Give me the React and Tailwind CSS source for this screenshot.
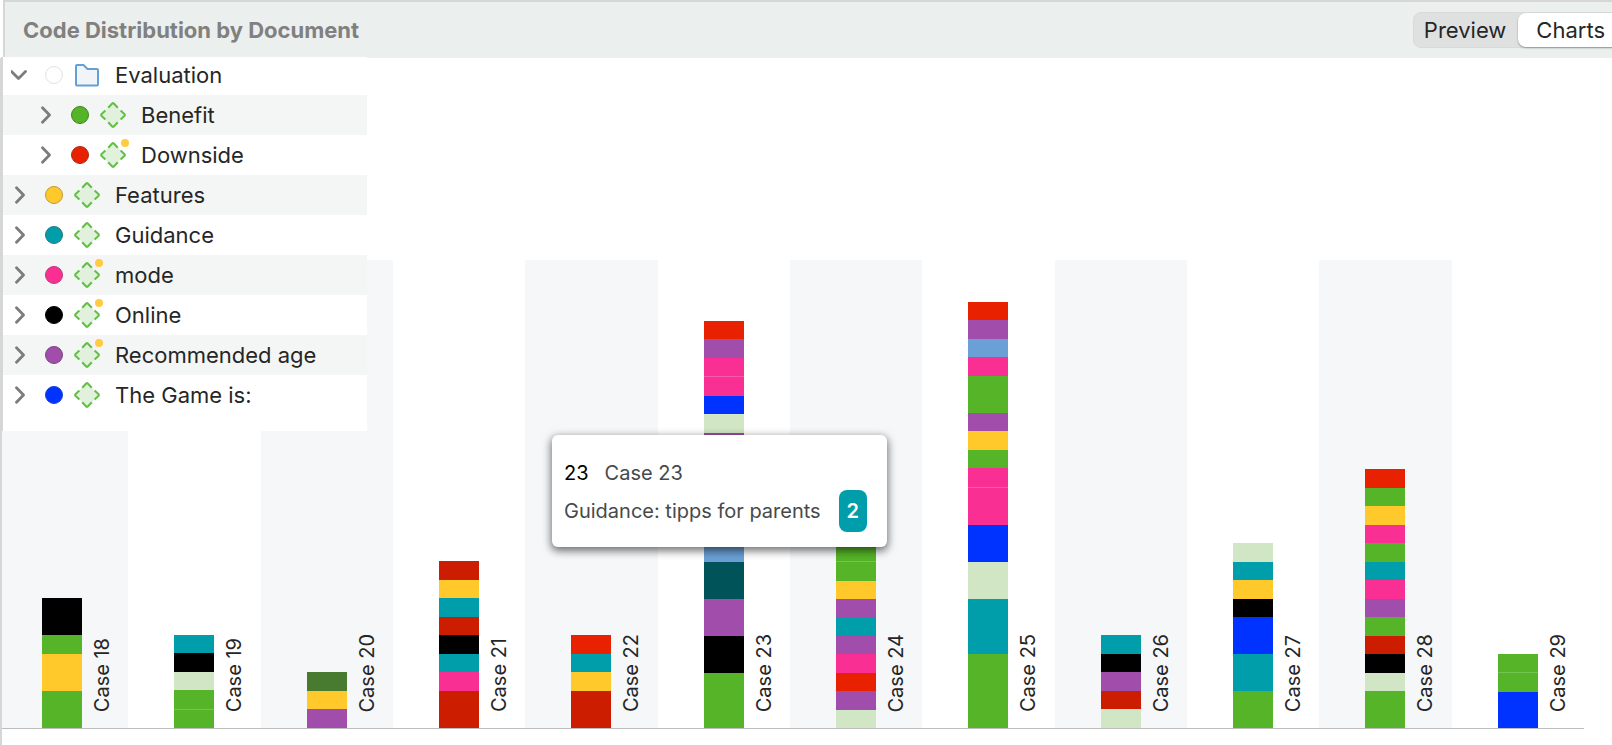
import { useState } from 'react';

const UNIT = 18.5;

const COLORS = {
  green: 'bg-[#55b427]',
  darkGreen: 'bg-[#487a30]',
  lightGreen: 'bg-[#d0e6c4]',
  yellow: 'bg-[#ffc92c]',
  red: 'bg-[#e82100]',
  darkRed: 'bg-[#cc1d00]',
  teal: 'bg-[#009eaa]',
  darkTeal: 'bg-[#005459]',
  pink: 'bg-[#f92f93]',
  purple: 'bg-[#a04dab]',
  blue: 'bg-[#0033ff]',
  lightBlue: 'bg-[#6aa0d5]',
  black: 'bg-black',
};

const codes = [
  { name: 'Evaluation', folder: true, open: true, dot: 'bg-white border-[#e2e2e2]' },
  { name: 'Benefit', child: true, dot: 'bg-[#55b427] border-[#3f861d]' },
  { name: 'Downside', child: true, memo: true, dot: 'bg-[#e82100] border-[#ae2a18]' },
  { name: 'Features', dot: 'bg-[#ffc92c] border-[#bf9a35]' },
  { name: 'Guidance', dot: 'bg-[#009eaa] border-[#2b7780]' },
  { name: 'mode', memo: true, dot: 'bg-[#f92f93] border-[#bb3a78]' },
  { name: 'Online', memo: true, dot: 'bg-black border-black' },
  { name: 'Recommended age', memo: true, dot: 'bg-[#a04dab] border-[#7a4582]' },
  { name: 'The Game is:', dot: 'bg-[#0033ff] border-[#1a41cf]' },
];

// Segments run from the top of each bar down to the axis
const cases = [
  { name: 'Case 18', segments: [['black', 2], ['green', 1], ['yellow', 2], ['green', 2]] },
  { name: 'Case 19', segments: [['teal', 1], ['black', 1], ['lightGreen', 1], ['green', 1], ['green', 1]] },
  { name: 'Case 20', segments: [['darkGreen', 1], ['yellow', 1], ['purple', 1]] },
  {
    name: 'Case 21',
    segments: [['darkRed', 1], ['yellow', 1], ['teal', 1], ['darkRed', 1], ['black', 1], ['teal', 1], ['pink', 1], ['darkRed', 2]],
  },
  { name: 'Case 22', segments: [['red', 1], ['teal', 1], ['yellow', 1], ['darkRed', 2]] },
  {
    name: 'Case 23',
    segments: [
      ['red', 1], ['purple', 1], ['pink', 1], ['pink', 1], ['blue', 1], ['lightGreen', 1], ['purple', 1],
      ['teal', 5], ['lightBlue', 1], ['darkTeal', 2], ['purple', 2], ['black', 2], ['green', 3],
    ],
  },
  {
    name: 'Case 24',
    segments: [
      ['green', 1], ['green', 1], ['yellow', 1], ['purple', 1], ['teal', 1], ['purple', 1],
      ['pink', 1], ['red', 1], ['purple', 1], ['lightGreen', 1],
    ],
  },
  {
    name: 'Case 25',
    segments: [
      ['red', 1], ['purple', 1], ['lightBlue', 1], ['pink', 1], ['green', 2], ['purple', 1], ['yellow', 1],
      ['green', 1], ['pink', 1], ['pink', 2], ['blue', 2], ['lightGreen', 2], ['teal', 3], ['green', 4],
    ],
  },
  { name: 'Case 26', segments: [['teal', 1], ['black', 1], ['purple', 1], ['darkRed', 1], ['lightGreen', 1]] },
  {
    name: 'Case 27',
    segments: [['lightGreen', 1], ['teal', 1], ['yellow', 1], ['black', 1], ['blue', 2], ['teal', 2], ['green', 2]],
  },
  {
    name: 'Case 28',
    segments: [
      ['red', 1], ['green', 1], ['yellow', 1], ['pink', 1], ['green', 1], ['teal', 1], ['pink', 1],
      ['purple', 1], ['green', 1], ['darkRed', 1], ['black', 1], ['lightGreen', 1], ['green', 2],
    ],
  },
  { name: 'Case 29', segments: [['green', 1], ['green', 1], ['blue', 2]] },
];

function Chevron({ open }) {
  return (
    <svg viewBox="0 0 18 18" className="size-[18px]" fill="none" stroke="#7c7c7c" strokeWidth="2.8" strokeLinecap="round" strokeLinejoin="round">
      <path d={open ? 'M0.5 5.5 L7.5 12.5 L14.5 5.5' : 'M5.5 1.8 L12.5 9 L5.5 16.2'} />
    </svg>
  );
}

function CodeIcon({ memo }) {
  return (
    <svg viewBox="0 0 26 26" className="size-[26px] overflow-visible" fill="none">
      <path d="M13 1 L25 13 L13 25 L1 13 Z" fill="#e2f1dc" />
      <path
        d="M8.2 5.8 L12.2 1.5 Q13 0.8 13.8 1.5 L17.8 5.8 M20.6 8.6 L24.6 12.2 Q25.3 13 24.6 13.8 L20.6 17.4 M17.8 20.2 L13.8 24.5 Q13 25.2 12.2 24.5 L8.2 20.2 M5.4 17.4 L1.4 13.8 Q0.7 13 1.4 12.2 L5.4 8.6"
        stroke="#62bf46"
        strokeWidth="2"
        strokeLinejoin="round"
      />
      {memo && <circle cx="25" cy="1" r="4" fill="#ffcb41" />}
    </svg>
  );
}

function FolderIcon() {
  return (
    <svg viewBox="0 0 26 26" className="size-[26px]" fill="#f2f5f8" stroke="#64a0d8" strokeWidth="2" strokeLinejoin="round">
      <path d="M2 4 Q2 3 3 3 H9.5 L13.5 7 H23 Q24 7 24 8 V22.5 Q24 23.5 23 23.5 H3 Q2 23.5 2 22.5 Z" />
    </svg>
  );
}

function CodeRow({ code }) {
  return (
    <li className={`flex h-10 items-center text-[22px] first:h-[38px] first:pb-0.5 even:bg-[#f4f6f5] ${code.child ? 'pl-[34px]' : 'pl-2'}`}>
      <button type="button" aria-label={code.name} aria-expanded={!!code.open}>
        <Chevron open={code.open} />
      </button>
      <span className={`ml-4 size-[18px] rounded-full border ${code.dot}`} />
      <span className="ml-[11px]">{code.folder ? <FolderIcon /> : <CodeIcon memo={code.memo} />}</span>
      <span className="ml-[15px] whitespace-nowrap">{code.name}</span>
    </li>
  );
}

function CaseColumn({ item }) {
  const total = item.segments.reduce((sum, [, count]) => sum + count, 0);

  return (
    <li className="flex h-[468px] items-end odd:bg-[#f5f7f9]">
      <div className="ml-[46px] flex w-10 shrink-0 flex-col" style={{ height: Math.round(total * UNIT) }}>
        {item.segments.map(([color, count], i) => {
          const split = i > 0 && item.segments[i - 1][0] === color;
          return (
            <div
              key={i}
              className={`basis-0 ${COLORS[color]} ${split ? 'border-t border-white/20' : ''}`}
              style={{ flexGrow: count }}
            />
          );
        })}
      </div>
      <span className="mb-4 ml-2 rotate-180 whitespace-nowrap text-[20px] leading-6 [writing-mode:vertical-rl]">
        {item.name}
      </span>
    </li>
  );
}

export default function App() {
  const [view, setView] = useState('Charts');

  return (
    <div className="flex min-h-screen flex-col overflow-hidden bg-white font-[Inter,sans-serif] text-[#262626]">
      <header className="ml-[3px] flex h-[58px] items-center justify-between border-t-2 border-l-2 border-[#d5d7d6] bg-[#ebefee] pl-[18px]">
        <h1 className="text-[22px] font-bold text-[#808080]">Code Distribution by Document</h1>
        <div className="-mr-3 flex h-9 rounded-lg border border-[#d9dbda] bg-[#dfe1e0] text-[22px]">
          {['Preview', 'Charts'].map((name) => (
            <button
              key={name}
              type="button"
              aria-pressed={view === name}
              onClick={() => setView(name)}
              className={`rounded-lg ${view === name ? 'bg-white px-[18px] shadow-[0_1px_2px_rgba(0,0,0,0.35)]' : 'pr-3 pl-[10px]'}`}
            >
              {name}
            </button>
          ))}
        </div>
      </header>

      <main className="relative grow border-l-2 border-[#d5d7d6] pt-[202px]">
        <div className="mr-[28px] overflow-hidden border-b border-[#bdbdbd]">
          <ul className="-ml-[6px] grid grid-cols-12">
            {cases.map((item) => (
              <CaseColumn key={item.name} item={item} />
            ))}
          </ul>
        </div>

        {/* Code tree, floating over the chart */}
        <ul className="absolute -top-px -left-px w-[366px] border-l-2 border-[#d5d7d6] bg-white pb-4">
          {codes.map((code) => (
            <CodeRow key={code.name} code={code} />
          ))}
        </ul>

        <div
          role="tooltip"
          className="absolute top-[377px] left-[550px] rounded-md bg-white px-3 pt-[21px] pb-[15px] text-[20px] text-[#474a4a] shadow-[0_3px_9px_1px_rgba(0,0,0,0.55)]"
        >
          <div className="flex h-[34px] items-center gap-4">
            <span className="text-black">23</span>
            <span>Case 23</span>
          </div>
          <div className="flex items-center gap-[18px] pr-2">
            <span className="whitespace-nowrap">Guidance: tipps for parents</span>
            <span className="flex h-[42px] w-7 items-center justify-center rounded-lg bg-[#009eaa] font-semibold text-white">2</span>
          </div>
        </div>
      </main>
    </div>
  );
}
